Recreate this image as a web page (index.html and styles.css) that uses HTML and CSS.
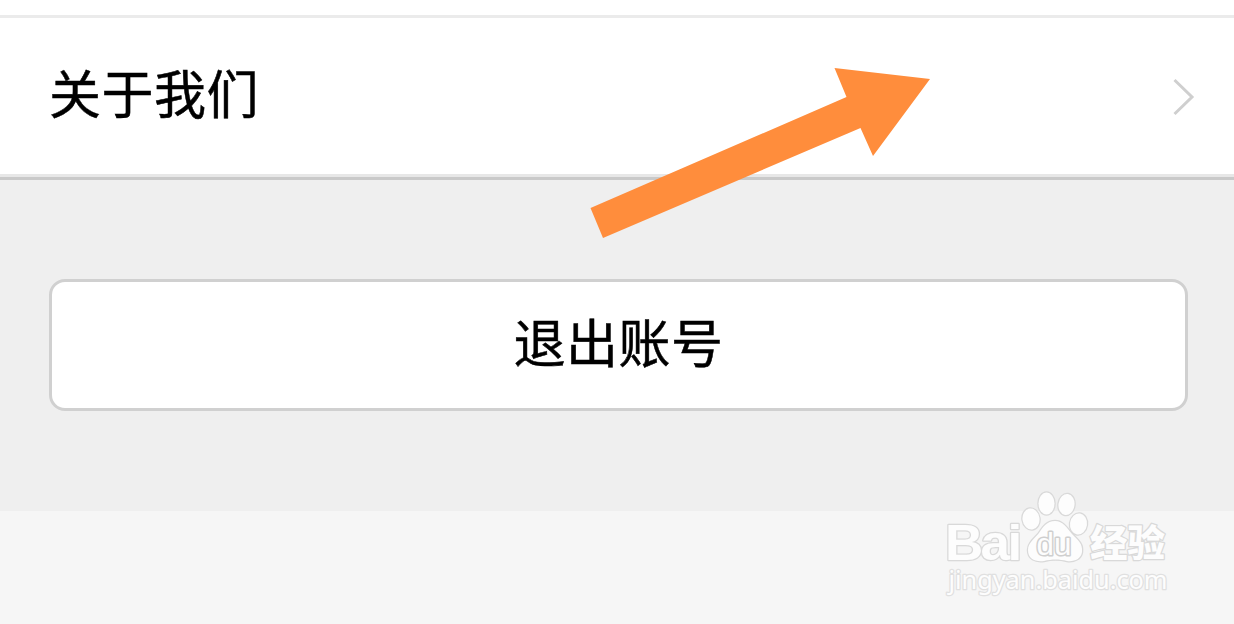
FILE: index.html
```html
<!DOCTYPE html>
<html lang="zh-CN">
<head>
	<meta charset="UTF-8">
	<meta name="viewport" content="width=device-width, initial-scale=1.0">
	<title>设置</title>

	<link rel="stylesheet" href="styles.css">
</head>
<body>
	<div class="page">
		<div class="list">
			<a class="list-item">
				<span>关于我们</span>
				<svg class="chevron" width="24" height="40" viewBox="0 0 24 40">
					<path d="M2.500 4L20 21L2.500 38"/>
				</svg>
			</a>
		</div>

		<div class="actions">
			<button type="button" class="btn-logout">退出账号</button>
		</div>

		<div class="footer"></div>

		<svg class="arrow" width="340" height="170" viewBox="0 0 340 170">
			<path d="M0.500 140L256.500 29L244.500 0L340 11L283 88L270.500 60L13 170Z"/>
		</svg>

		<svg class="watermark" width="234" height="120" viewBox="0 0 234 120">
			<g class="logo">
				<text class="latin" transform="translate(9 75) scale(1.06 1)">Bai</text>
				<ellipse cx="95" cy="34" rx="8.500" ry="10.500" transform="rotate(-8 95 34)"/>
				<ellipse cx="110.500" cy="18.500" rx="8" ry="11"/>
				<ellipse cx="130.500" cy="19.500" rx="8" ry="10.500" transform="rotate(8 130.500 19.500)"/>
				<ellipse cx="142.500" cy="39" rx="8.500" ry="10.500" transform="rotate(8 142.500 39)"/>
				<path d="M119 36C127 36 131 43 136 49C142 55 147 59 146 67C145 74 138 77 131 76C123 74 116 74 108 76C99 77 92 74 92 65C92 58 98 54 103 48C107 42 111 36 119 36Z"/>
				<text class="du" x="100.500" y="69.500" textLength="35" lengthAdjust="spacingAndGlyphs">du</text>
				<text class="cjk" x="154" y="71.500" textLength="75" lengthAdjust="spacingAndGlyphs">经验</text>
			</g>
			<text class="url" x="12.500" y="104" textLength="219" lengthAdjust="spacingAndGlyphs">jingyan.baidu.com</text>
		</svg>
	</div>
</body>
</html>
```

FILE: styles.css
```css
* {
	box-sizing: border-box;
}
body {
	margin: 0;
	font-family: "Noto Sans CJK SC", sans-serif;
	color: #000;
	background: #fff;
}
.page {
	position: relative;
	height: 624px;
	display: flex;
	flex-direction: column;
	overflow: hidden;
}
.list {
	margin-top: 15px;
	border-top: 3px solid #ebebeb;
	border-bottom: 3px solid #c9c9c9;
}
.list-item {
	display: flex;
	align-items: center;
	justify-content: space-between;
	height: 159px;
	padding: 0 38px 0 49px;
	border-bottom: 3px solid #e7e7e7;
	font-size: 52px;
	line-height: 76px;
	letter-spacing: 0.5px;
	-webkit-text-stroke: 0.5px #000;
}
.list-item span {
	padding-bottom: 8px;
}
.chevron {
	fill: none;
	stroke: #cfcfcf;
	stroke-width: 3;
}
.actions {
	height: 331px;
	padding: 99px 46px 0 49px;
	background: #efefef;
}
.btn-logout {
	display: block;
	width: 100%;
	height: 132px;
	padding: 0 0 8px;
	border: 3px solid #d0d0d0;
	border-radius: 16px;
	background: #fff;
	color: #000;
	font-family: inherit;
	font-size: 52px;
	line-height: 76px;
	letter-spacing: 0.5px;
	-webkit-text-stroke: 0.5px #000;
}
.footer {
	flex: 1;
	background: #f6f6f6;
}
.arrow {
	position: absolute;
	left: 590px;
	top: 68px;
	fill: #ff8d3c;
}
.watermark {
	position: absolute;
	left: 936px;
	top: 485px;
	fill: #fdfdfd;
	stroke: #d9d9d9;
	stroke-width: 2.5;
	paint-order: stroke;
	stroke-linejoin: round;
}
.watermark .latin {
	font-family: "Liberation Sans", sans-serif;
	font-size: 50px;
	font-weight: 700;
	letter-spacing: -2.5px;
}
.watermark .du {
	font-family: "Liberation Sans", sans-serif;
	font-size: 31px;
	stroke: #cfcfcf;
	stroke-width: 3;
}
.watermark .cjk {
	font-size: 37px;
	font-weight: 900;
}
.watermark .url {
	font-family: "Noto Sans", sans-serif;
	font-size: 25px;
	stroke: #e0e0e0;
}
```
